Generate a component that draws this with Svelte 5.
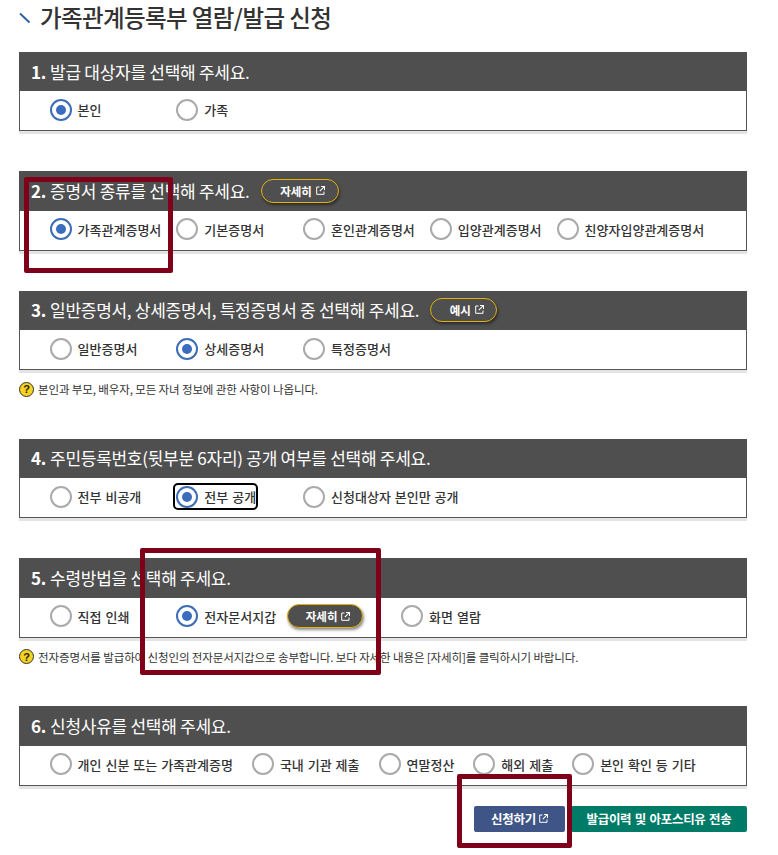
<script>
    const sections = [
        {
            num: "1.",
            title: "발급 대상자를 선택해 주세요.",
            options: [{ label: "본인", checked: true }, { label: "가족" }],
        },
        {
            num: "2.",
            title: "증명서 종류를 선택해 주세요.",
            button: "자세히",
            options: [
                { label: "가족관계증명서", checked: true },
                { label: "기본증명서" },
                { label: "혼인관계증명서" },
                { label: "입양관계증명서" },
                { label: "친양자입양관계증명서" },
            ],
        },
        {
            num: "3.",
            title: "일반증명서, 상세증명서, 특정증명서 중 선택해 주세요.",
            button: "예시",
            options: [
                { label: "일반증명서" },
                { label: "상세증명서", checked: true },
                { label: "특정증명서" },
            ],
            note: "본인과 부모, 배우자, 모든 자녀 정보에 관한 사항이 나옵니다.",
        },
        {
            num: "4.",
            title: "주민등록번호(뒷부분 6자리) 공개 여부를 선택해 주세요.",
            options: [
                { label: "전부 비공개" },
                { label: "전부 공개", checked: true, focused: true },
                { label: "신청대상자 본인만 공개" },
            ],
        },
        {
            num: "5.",
            title: "수령방법을 선택해 주세요.",
            options: [
                { label: "직접 인쇄" },
                { label: "전자문서지갑", checked: true, more: "자세히" },
                { label: "화면 열람" },
            ],
            note: "전자증명서를 발급하여 신청인의 전자문서지갑으로 송부합니다. 보다 자세한 내용은 [자세히]를 클릭하시기 바랍니다.",
        },
        {
            num: "6.",
            title: "신청사유를 선택해 주세요.",
            tight: true,
            options: [
                { label: "개인 신분 또는 가족관계증명", checked: false },
                { label: "국내 기관 제출" },
                { label: "연말정산" },
                { label: "해외 제출" },
                { label: "본인 확인 등 기타" },
            ],
        },
    ];
</script>

{#snippet external()}
    <svg class="ext" viewBox="0 0 9 9" width="9" height="9" aria-hidden="true">
        <path d="M3.5 1H.7v7.3H8V5.5" fill="none" stroke="currentColor" stroke-width="1" />
        <path d="M5 .5h3.5V4M8.3.7 3.8 5.2" fill="none" stroke="currentColor" stroke-width="1.1" />
    </svg>
{/snippet}

<main class="page">
    <h1 class="title">
        <svg class="title__mark" viewBox="0 0 12 12" width="12" height="12" aria-hidden="true">
            <path d="M1 1.5 10.5 10.5" stroke="#2a5b9c" stroke-width="1.8" fill="none" />
        </svg>
        가족관계등록부 열람/발급 신청
    </h1>

    {#each sections as section}
        <section class="section">
            <div class="section__head">
                <b>{section.num}</b>
                <span>{section.title}</span>
                {#if section.button}
                    <button class="pill" type="button">{section.button} {@render external()}</button>
                {/if}
            </div>
            <div class="section__body" class:tight={section.tight}>
                {#each section.options as option}
                    <div class="option" class:option--more={option.more}>
                        <label class="radio" class:focused={option.focused}>
                            <span class="radio__mark" class:checked={option.checked}></span>
                            {option.label}
                        </label>
                        {#if option.more}
                            <button class="pill pill--dark" type="button">{option.more} {@render external()}</button>
                        {/if}
                    </div>
                {/each}
            </div>
        </section>
        {#if section.note}
            <p class="note"><span class="note__icon">?</span>{section.note}</p>
        {/if}
    {/each}

    <div class="actions">
        <button class="action action--blue" type="button">신청하기 {@render external()}</button>
        <button class="action action--green" type="button">발급이력 및 아포스티유 전송</button>
    </div>

    <div class="mark mark--one"></div>
    <div class="mark mark--two"></div>
    <div class="mark mark--three"></div>
</main>

<style>
    :global(body) {
        margin: 0;
        background: #fff;
    }

    .page {
        position: relative;
        box-sizing: border-box;
        width: 778px;
        height: 855px;
        padding: 0 31px 0 19px;
        font-family: "Noto Sans CJK KR", "Noto Sans", sans-serif;
        color: #333;
    }

    .title {
        display: flex;
        align-items: center;
        gap: 9px;
        height: 52px;
        margin: 0;
        padding-bottom: 18px;
        box-sizing: border-box;
        font-size: 23.5px;
        font-weight: 500;
        letter-spacing: -0.6px;
        color: #333;
    }

    .title__mark {
        margin-top: 2px;
    }

    .section {
        height: 79.4px;
        margin-bottom: 40px;
        box-shadow: 0 3px 0 #e4e4e4;
    }

    .section__head {
        display: flex;
        align-items: center;
        box-sizing: border-box;
        height: 39.4px;
        padding-left: 12px;
        padding-bottom: 1px;
        background: #4f4f4f;
        color: #fff;
        font-size: 17px;
        letter-spacing: -0.27px;
    }

    .section__head b {
        margin-right: 4px;
        font-weight: 700;
    }

    .section__body {
        display: flex;
        align-items: center;
        box-sizing: border-box;
        height: 40px;
        padding-left: 29.6px;
        padding-bottom: 2px;
        background: #fff;
        border: 1px solid #555;
        border-top: 0;
    }

    .option {
        display: flex;
        flex: none;
        align-items: center;
        white-space: nowrap;
    }

    .section__body:not(.tight) .option:not(.option--more) {
        width: 126.75px;
    }

    .tight .option {
        margin-right: 19px;
    }

    .radio {
        display: flex;
        align-items: center;
        gap: 6px;
        font-size: 13px;
        font-weight: 500;
        word-spacing: 1px;
        color: #333;
    }

    .radio.focused {
        outline: 2px solid #000;
        outline-offset: 0;
        border-radius: 3px;
        margin-left: -1px;
        padding: 0.5px 0 0.5px 1px;
    }

    .radio__mark {
        position: relative;
        flex: none;
        box-sizing: border-box;
        width: 22px;
        height: 22px;
        border: 2px solid #aaa;
        border-radius: 50%;
        background: #fff;
    }

    .radio__mark.checked {
        border-color: #3d6db5;
    }

    .radio__mark.checked::after {
        content: "";
        position: absolute;
        top: 4px;
        left: 4px;
        width: 10px;
        height: 10px;
        border-radius: 50%;
        background: #3a6dbd;
    }

    .pill {
        display: inline-flex;
        align-items: center;
        justify-content: center;
        gap: 4px;
        box-sizing: border-box;
        flex: none;
        width: 78px;
        height: 24px;
        margin-left: 11px;
        padding: 0 0 0 6px;
        border: 1.5px solid #e3b309;
        border-radius: 12px;
        background: #4f4f4f;
        color: #fff;
        font-family: inherit;
        font-size: 11.5px;
        font-weight: 700;
        letter-spacing: 0;
        box-shadow: 1px 2px 3px rgba(0, 0, 0, 0.45);
    }

    .section__head .pill {
        width: 67px;
    }

    .section:nth-of-type(2) .pill {
        width: 78px;
    }

    .pill--dark {
        width: 76px;
        margin-right: 38px;
    }

    .ext {
        flex: none;
    }

    .note {
        display: flex;
        align-items: center;
        gap: 4px;
        box-sizing: border-box;
        height: 28.6px;
        margin: -35px 0 35px;
        font-size: 11.5px;
        letter-spacing: -0.12px;
        color: #333;
    }

    .note__icon {
        display: flex;
        align-items: center;
        justify-content: center;
        flex: none;
        box-sizing: border-box;
        width: 15px;
        height: 15px;
        border: 1px solid #333;
        border-radius: 50%;
        background: #f7d21e;
        color: #222;
        font-family: "Liberation Sans", sans-serif;
        font-size: 11px;
        font-weight: 700;
    }

    .actions {
        display: flex;
        justify-content: flex-end;
        gap: 6px;
        margin-top: -20px;
    }

    .action {
        display: flex;
        align-items: center;
        justify-content: center;
        gap: 3px;
        height: 26px;
        padding: 0;
        border: 0;
        border-radius: 2px;
        color: #fff;
        font-family: inherit;
        font-size: 12.5px;
        font-weight: 700;
        letter-spacing: -0.3px;
        word-spacing: 1px;
    }

    .action--blue {
        width: 91px;
        background: #3f5587;
    }

    .action--green {
        width: 176px;
        background: #007b68;
    }

    .mark {
        position: absolute;
        box-sizing: border-box;
        border: 5px solid #7f0019;
        border-radius: 2px;
        pointer-events: none;
    }

    .mark--one {
        left: 24px;
        top: 177px;
        width: 149px;
        height: 96px;
    }

    .mark--two {
        left: 140px;
        top: 548px;
        width: 241px;
        height: 127px;
    }

    .mark--three {
        left: 457px;
        top: 774px;
        width: 115px;
        height: 74px;
    }
</style>
